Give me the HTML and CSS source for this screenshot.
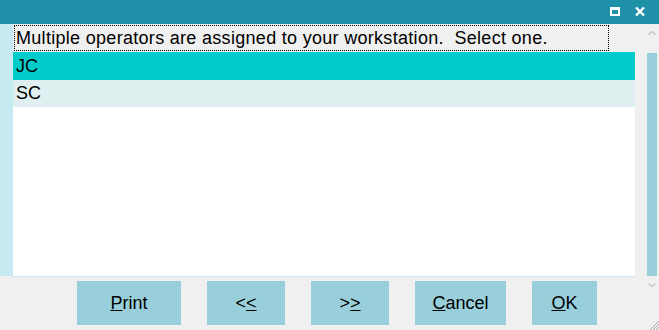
FILE: index.html
```html
<!DOCTYPE html>
<html lang="en">
<head>
    <meta charset="UTF-8">
    <meta name="viewport" content="width=device-width, initial-scale=1.0">
    <title>Select Operator</title>
    <link rel="stylesheet" href="styles.css">
</head>
<body>

    <!-- Title bar -->
    <div class="titlebar">
        <span class="btn-max"></span>
        <svg class="btn-close" width="10" height="9" viewBox="0 0 10 9">
            <path d="M1 0.5 L9 8.5 M9 0.5 L1 8.5" stroke="#fff" stroke-width="2.4"/>
        </svg>
    </div>

    <div class="window">
        <div class="content">
            <div class="pane">
                <div class="strip"></div>
                <div class="list">
                    <div class="header">
                        <div class="prompt">Multiple operators are assigned to your workstation.&nbsp; Select one.</div>
                    </div>
                    <div class="row selected">JC</div>
                    <div class="row alt">SC</div>
                    <div class="fill"></div>
                </div>
            </div>

            <!-- Buttons -->
            <div class="footer">
                <button class="button w-print"><u>P</u>rint</button>
                <button class="button w-nav">&lt;<u>&lt;</u></button>
                <button class="button w-nav">&gt;<u>&gt;</u></button>
                <button class="button w-cancel"><u>C</u>ancel</button>
                <button class="button w-ok"><u>O</u>K</button>
            </div>
        </div>

        <!-- Scrollbar -->
        <div class="scrollbar">
            <svg class="arrow-up" width="8" height="4" viewBox="0 0 8 4">
                <path d="M0.5 3.5 L4 0.5 L7.5 3.5" fill="none" stroke="#c4c4c4" stroke-width="1.4"/>
            </svg>
            <div class="thumb"></div>
            <svg class="arrow-down" width="8" height="4" viewBox="0 0 8 4">
                <path d="M0.5 0.5 L4 3.5 L7.5 0.5" fill="none" stroke="#c4c4c4" stroke-width="1.4"/>
            </svg>
            <svg class="grip" width="10" height="10" viewBox="0 0 10 10">
                <path d="M10 1 L1 10 M10 4 L4 10 M10 7 L7 10" stroke="#a8a8a8" stroke-width="1"/>
            </svg>
        </div>
    </div>

</body>
</html>
```

FILE: styles.css
```css
body {
    margin: 0;
    width: 659px;
    height: 330px;
    overflow: hidden;
    background-color: #f0f0f0;
    font-family: "Liberation Sans", Arial, sans-serif;
    font-size: 18px;
    color: #000;
}
.titlebar {
    height: 24px;
    background-color: #1e90a8;
    display: flex;
    justify-content: flex-end;
    align-items: center;
    padding-right: 14px;
    gap: 15px;
}
.btn-max {
    width: 6px;
    height: 4px;
    border: 2px solid #fff;
    border-top-width: 3px;
    margin-bottom: 1px;
}
.btn-close {
    display: block;
    margin-bottom: 1px;
}
.window {
    display: flex;
    height: 306px;
}
.content {
    width: 635px;
    display: flex;
    flex-direction: column;
}
.pane {
    display: flex;
    height: 253px;
}
.strip {
    width: 13px;
    height: 252px;
    background-color: #c5eaf2;
}
.list {
    width: 622px;
    display: flex;
    flex-direction: column;
    border-bottom: 1px solid #c5eaf2;
}
.header {
    height: 28px;
    padding-top: 1px;
    padding-left: 1px;
    box-sizing: border-box;
}
.prompt {
    width: 595px;
    height: 26px;
    box-sizing: border-box;
    border: 1px dotted #000;
    padding-left: 1px;
    line-height: 24px;
    letter-spacing: 0.3px;
    white-space: nowrap;
}
.row {
    height: 28px;
    line-height: 28px;
    padding-left: 3px;
}
.row.alt {
    height: 27px;
    line-height: 27px;
}
.selected {
    background-color: #00cccc;
}
.alt {
    background-color: #e0eff0;
}
.fill {
    flex: 1;
    background-color: #fff;
}
.footer {
    display: flex;
    gap: 26px;
    padding-top: 4px;
    padding-left: 77px;
}
.button {
    height: 44px;
    padding: 0;
    border: none;
    background-color: #98cfdb;
    font-family: inherit;
    font-size: 18px;
    color: #000;
}
.w-print { width: 104px; }
.w-nav { width: 78px; }
.w-cancel { width: 91px; }
.w-ok { width: 65px; }
.scrollbar {
    width: 24px;
    display: flex;
    flex-direction: column;
    align-items: flex-start;
}
.arrow-up {
    display: block;
    margin: 7px 0 0 13px;
}
.thumb {
    width: 10px;
    height: 223px;
    margin: 18px 0 0 12px;
    background-color: #98cfdb;
}
.arrow-down {
    display: block;
    margin: 7px 0 0 13px;
}
.grip {
    display: block;
    margin: auto 0 0 14px;
}
```
